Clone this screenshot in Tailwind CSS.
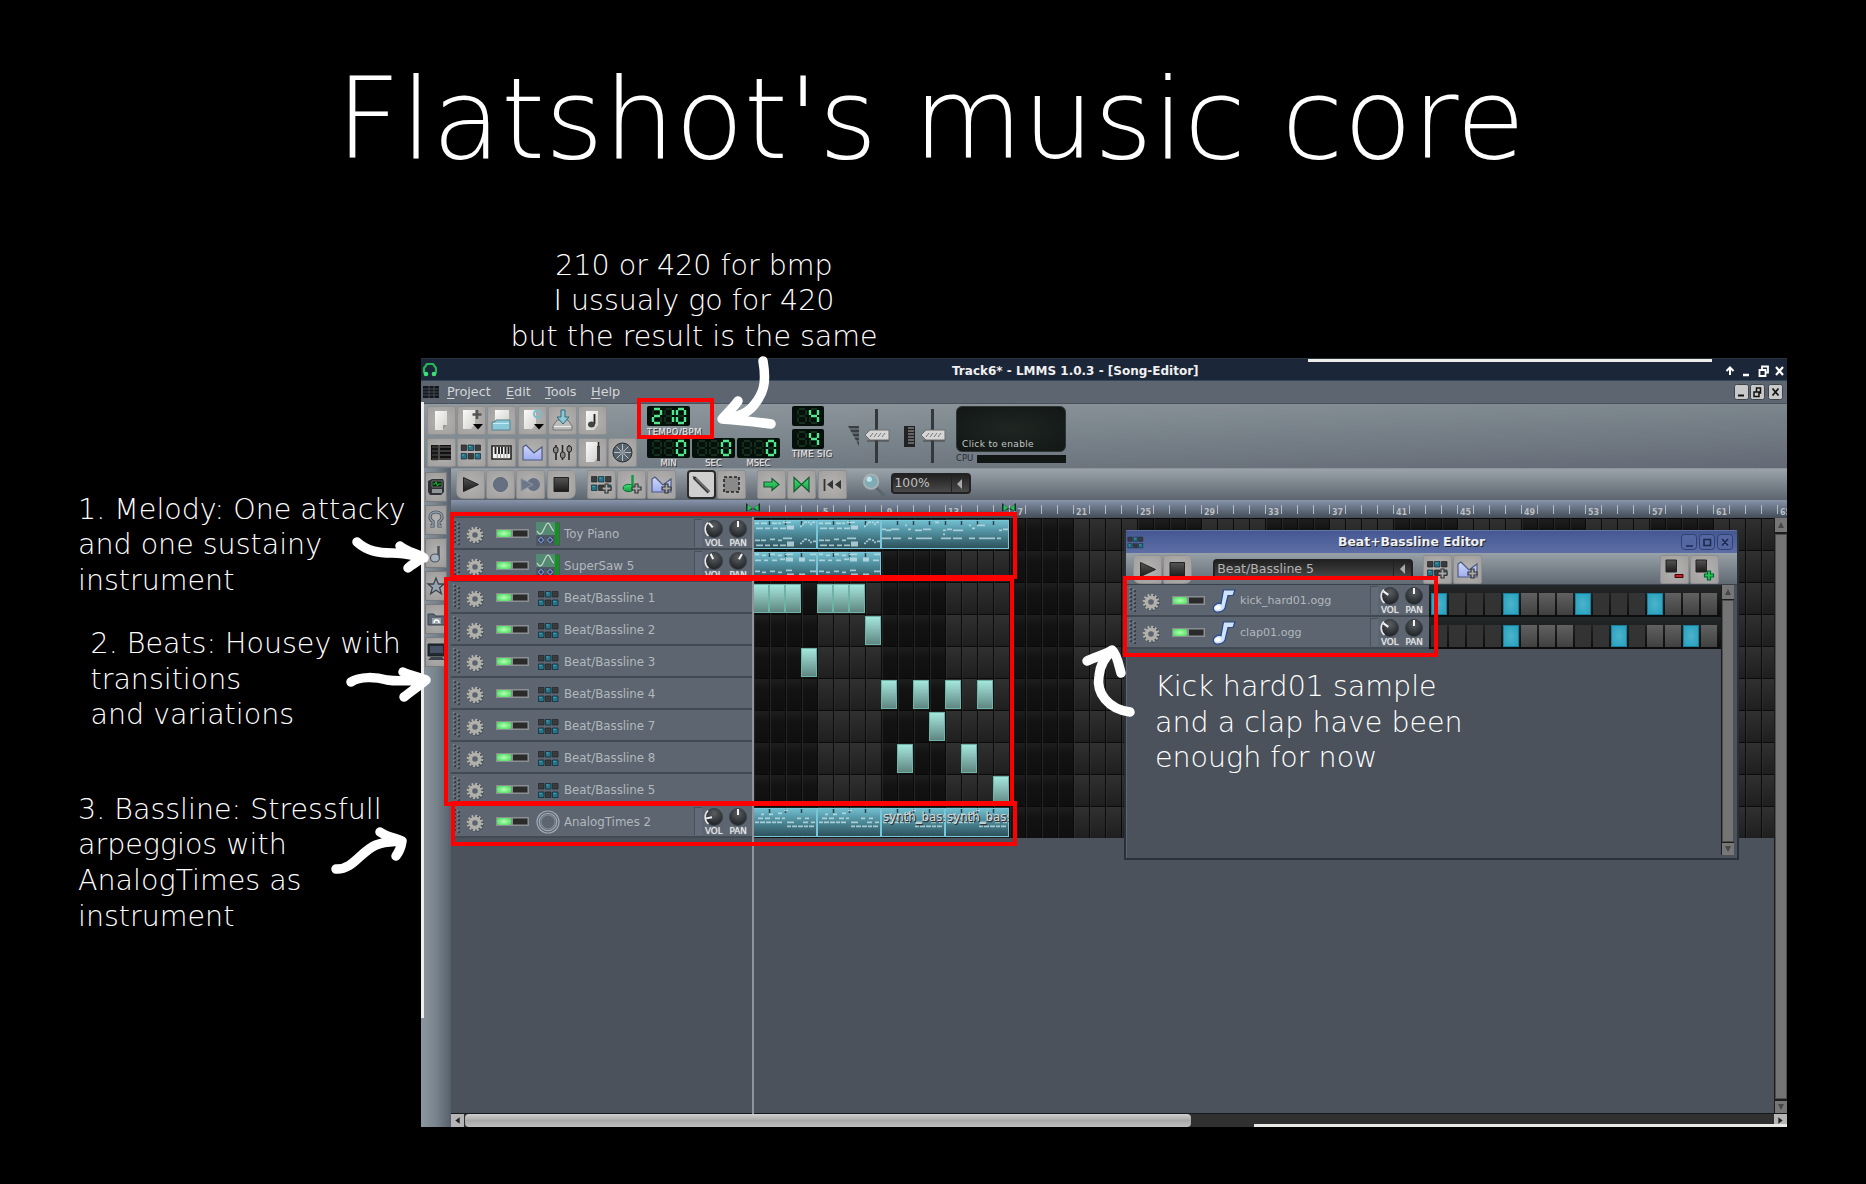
<!DOCTYPE html>
<html lang="en">
<head>
<meta charset="utf-8">
<title>Flatshot's music core</title>
<script src="https://cdn.jsdelivr.net/npm/@tailwindcss/browser@4"></script>
</head>
<body class="bg-black">
<svg class="absolute h-0 w-0" xmlns="http://www.w3.org/2000/svg">
  <defs>
    <linearGradient id="gBlue" x1="0" y1="0" x2="0" y2="1"><stop offset="0" stop-color="#cfd8f8"/><stop offset="1" stop-color="#9fadf2"/></linearGradient>
    <linearGradient id="gDark" x1="0" y1="0" x2="0" y2="1"><stop offset="0" stop-color="#555"/><stop offset="1" stop-color="#1c1c1c"/></linearGradient>
    <linearGradient id="gPaper" x1="0" y1="0" x2="1" y2="1"><stop offset="0" stop-color="#fafafa"/><stop offset="1" stop-color="#d2d2cc"/></linearGradient>
    <linearGradient id="gGreen" x1="0" y1="0" x2="0" y2="1"><stop offset="0" stop-color="#3fe07a"/><stop offset="1" stop-color="#12a040"/></linearGradient>
    <radialGradient id="gKnob" cx=".5" cy=".3" r=".7"><stop offset="0" stop-color="#5a5e62"/><stop offset="1" stop-color="#1e2124"/></radialGradient>
    <radialGradient id="gLed" cx=".5" cy=".5" r=".6"><stop offset="0" stop-color="#b4ffb0"/><stop offset="1" stop-color="#4fe065"/></radialGradient>
  </defs>
  <symbol id="i-new" viewBox="0 0 29 29"><path d="M8 5h12v14l-4 5H8z" fill="url(#gPaper)"/><path d="M20 19l-4 5v-5z" fill="#999"/></symbol>
  <symbol id="i-newt" viewBox="0 0 29 29"><path d="M6 4h12v14l-4 5H6z" fill="url(#gPaper)"/><path d="M20 4v9M15.500 8.500h9" stroke="#555" stroke-width="2.500"/><path d="M16 18h10l-5 5.500z" fill="#000"/></symbol>
  <symbol id="i-open" viewBox="0 0 29 29"><path d="M8 4h14v13H8z" fill="url(#gPaper)"/><path d="M5 16h3l1-2h14v10H5z" fill="#8cc9d8" stroke="#55828e"/><path d="M6 17.500h16" stroke="#c9eef5"/></symbol>
  <symbol id="i-recent" viewBox="0 0 29 29"><path d="M6 4h12v14l-4 5H6z" fill="url(#gPaper)"/><circle cx="19.500" cy="8" r="3.500" fill="none" stroke="#7cbccc" stroke-width="2"/><path d="M16 18h10l-5 5.500z" fill="#000"/></symbol>
  <symbol id="i-save" viewBox="0 0 29 29"><path d="M9 14h11l4 6v4H5v-4z" fill="#bbb" stroke="#777"/><path d="M6 20.500h17" stroke="#eee"/><path d="M13 4h4v7h4l-6 7-6-7h4z" fill="#8cc9d8" stroke="#336673"/></symbol>
  <symbol id="i-export" viewBox="0 0 29 29"><path d="M8 5h12v14l-4 5H8z" fill="url(#gPaper)"/><path d="M16.500 8v10" stroke="#222" stroke-width="1.800"/><ellipse cx="13.500" cy="18.500" rx="3.500" ry="3" fill="#444"/></symbol>
  <symbol id="i-song" viewBox="0 0 29 29"><path d="M4 7h20v15H4z" fill="#111"/><path d="M5 9h6M5 13h6M5 17h6M5 21h6" stroke="#333" stroke-width="2.500"/><path d="M13 9h11M13 13h11M13 17h11M13 21h11" stroke="#4a4a4a" stroke-width="1.500"/><path d="M12 7v15" stroke="#888"/></symbol>
  <symbol id="i-bb" viewBox="0 0 21 17"><path d="M.5 1.500h5.500v5.500H.5zM14.500 1.500h5.500v5.500h-5.500zM7.500 10h5.500v5.500H7.500z" fill="#383c3f" stroke="#222" stroke-width=".7"/><path d="M7.500 1.500h5.500v5.500H7.500zM.5 10h5.500v5.500H.5zM14.500 10h5.500v5.500h-5.500z" fill="#237687" stroke="#123" stroke-width=".7"/><path d="M8.500 3h2M1.500 11.500h2M15.500 11.500h2" stroke="#59aab8"/></symbol>
  <symbol id="i-piano" viewBox="0 0 29 29"><path d="M5 8h19v13H5z" fill="#f2f2f2" stroke="#222" stroke-width="1.600"/><path d="M8.500 9v7M12 9v7M15 9v7M18.500 9v7M21.500 9v7" stroke="#222" stroke-width="1.900"/><path d="M10.300 16v5M13.500 16v5M17 16v5M20 16v5" stroke="#777" stroke-width=".7"/></symbol>
  <symbol id="i-auto" viewBox="0 0 29 29"><path d="M5 9l3-2 8 8 8-6v13H5z" fill="url(#gBlue)" stroke="#4d5a80" stroke-width="1.200"/></symbol>
  <symbol id="i-mixer" viewBox="0 0 29 29"><path d="M8 7v15M14.500 7v15M21 7v15" stroke="#222" stroke-width="1.600"/><g fill="#888" stroke="#222"><rect x="5.500" y="9" width="4.500" height="6" rx="2"/><rect x="12.500" y="14" width="4.500" height="6" rx="2"/><rect x="19" y="8" width="4.500" height="6" rx="2"/></g></symbol>
  <symbol id="i-notes" viewBox="0 0 29 29"><path d="M8 4h12v15l-4 5H8z" fill="url(#gPaper)"/><path d="M20.500 8v15" stroke="#444" stroke-width="3"/><path d="M20.500 4v5" stroke="#222" stroke-width="1.500"/></symbol>
  <symbol id="i-ctrl" viewBox="0 0 29 29"><circle cx="14.500" cy="14.500" r="9.500" fill="#59636c" stroke="#222b33"/><path d="M14.500 6v17M6 14.500h17M8.500 8.500l12 12M20.500 8.500l-12 12" stroke="#b9c3cb"/><circle cx="14.500" cy="14.500" r="2.500" fill="#88929a"/></symbol>
  <symbol id="i-play" viewBox="0 0 29 29"><path d="M7.500 7.500l15 7-15 7z" fill="url(#gDark)" stroke="#222"/></symbol>
  <symbol id="i-rec" viewBox="0 0 29 29"><circle cx="14.500" cy="14.500" r="7" fill="#657183" stroke="#5a6575"/></symbol>
  <symbol id="i-recplay" viewBox="0 0 29 29"><circle cx="17.500" cy="14.500" r="6.500" fill="#657183"/><path d="M5 8.500l12 6-12 6.500z" fill="#6c788a" stroke="#8e96a2"/></symbol>
  <symbol id="i-stop" viewBox="0 0 29 29"><path d="M7 7.500h14.500v14H7z" fill="url(#gDark)" stroke="#222"/></symbol>
  <symbol id="i-plus" viewBox="0 0 29 29"><path d="M18 14h3v3h3v3h-3v3h-3v-3h-3v-3h3z" fill="#aaa" stroke="#333" stroke-width="1.200"/></symbol>
  <symbol id="i-addbb" viewBox="0 0 29 29"><use href="#i-bb" x="4" y="5" width="21" height="17"/><use href="#i-plus" width="29" height="29"/></symbol>
  <symbol id="i-addsample" viewBox="0 0 29 29"><path d="M15.500 5v14" stroke="#149a44" stroke-width="2.500"/><ellipse cx="11.500" cy="18" rx="5.500" ry="3.700" fill="url(#gGreen)" stroke="#0b6a2b"/><use href="#i-plus" width="29" height="29"/></symbol>
  <symbol id="i-addauto" viewBox="0 0 29 29"><use href="#i-auto" width="29" height="29"/><use href="#i-plus" width="29" height="29"/></symbol>
  <symbol id="i-pen" viewBox="0 0 29 29"><path d="M6 6.500l17 17" stroke="#3a3a3a" stroke-width="4"/><path d="M7.500 7l16 16" stroke="#777" stroke-width="1.500"/><path d="M4 4.500l4 1.500-2 2z" fill="#222"/></symbol>
  <symbol id="i-select" viewBox="0 0 29 29"><path d="M7 7h15v15H7z" fill="#8a8a8a" stroke="#222" stroke-width="1.600" stroke-dasharray="3 2"/></symbol>
  <symbol id="i-right" viewBox="0 0 29 29"><path d="M7 12h8V8.500l7 6-7 6V17H7z" fill="url(#gGreen)" stroke="#1c5a30" stroke-width="1.200"/></symbol>
  <symbol id="i-loop" viewBox="0 0 29 29"><path d="M7 7.500l7.500 7 7.500-7v14l-7.500-7-7.500 7z" fill="url(#gGreen)" stroke="#1c5a30" stroke-width="1.200"/></symbol>
  <symbol id="i-start" viewBox="0 0 29 29"><path d="M6.500 9v12" stroke="#333" stroke-width="1.800"/><path d="M15 10v9l-6-4.500zM23 10v9l-6-4.500z" fill="#333"/></symbol>
  <symbol id="i-lens" viewBox="0 0 26 26"><path d="M14 15l9 9" stroke="#5b666f" stroke-width="3"/><circle cx="9.500" cy="9.500" r="7.500" fill="#7eabb4" stroke="#a9b0b4" stroke-width="2"/><circle cx="7.500" cy="7" r="2.800" fill="#bfe2e6"/></symbol>
  <symbol id="i-rm" viewBox="0 0 29 29"><path d="M6 5h10.500v12H6z" fill="url(#gDark)" stroke="#222"/><path d="M15 19.500h8v3h-8z" fill="#c3222c" stroke="#400"/></symbol>
  <symbol id="i-ad" viewBox="0 0 29 29"><path d="M6 5h10.500v12H6z" fill="url(#gDark)" stroke="#222"/><path d="M17.500 16h3v3h3v3h-3v3h-3v-3h-3v-3h3z" fill="#25c452" stroke="#063" stroke-width="1.200"/></symbol>
  <symbol id="i-gear" viewBox="0 0 18 18"><circle cx="9.400" cy="9.900" r="6" fill="none" stroke="#333a42" stroke-width="4.500" stroke-dasharray="2 1.140" opacity=".6"/><circle cx="9" cy="9" r="7" fill="none" stroke="#b6b4ae" stroke-width="2.600" stroke-dasharray="1.900 1.765"/><circle cx="9" cy="9" r="4.600" fill="none" stroke="#b2b0aa" stroke-width="3.600"/></symbol>
  <symbol id="i-led" viewBox="0 0 33 9"><path d="M0 0h33v9H0z" fill="#8b8f91"/><path d="M17 1.500h14.500v6H17z" fill="#2a2a2a"/><rect x="1" y="1" width="14" height="7" rx="1.500" fill="url(#gLed)"/></symbol>
  <symbol id="i-grip" viewBox="0 0 9 26"><g fill="#353c45"><path d="M1 1h2v2H1zM5 3h2v2H5zM1 5h2v2H1zM5 7h2v2H5zM1 9h2v2H1zM5 11h2v2H5zM1 13h2v2H1zM5 15h2v2H5zM1 17h2v2H1zM5 19h2v2H5zM1 21h2v2H1zM5 23h2v2H5z"/></g><g fill="#7d8792"><path d="M0 0h1.500v1.500H0zM4 2h1.500v1.500H4zM0 4h1.500v1.500H0zM4 6h1.500v1.500H4zM0 8h1.500v1.500H0zM4 10h1.500v1.500H4zM0 12h1.500v1.500H0zM4 14h1.500v1.500H4zM0 16h1.500v1.500H0zM4 18h1.500v1.500H4zM0 20h1.500v1.500H0zM4 22h1.500v1.500H4z"/></g></symbol>
  <symbol id="i-osc" viewBox="0 0 24 24"><path d="M0 0h24v24H0z" fill="#4f5963"/><path d="M0 0h19v13H0z" fill="#548a72"/><path d="M1 9c3 5 5 3 7-2s4-8 6-4 3 6 4 6" fill="none" stroke="#c5dccf" stroke-width="1.200"/><path d="M19 1h4v22h-4z" fill="#12911f"/><path d="M2 15h6v6H2zM11 15h6v6h-6z" fill="#2d3c63"/><g fill="none" stroke="#9fb1d9"><circle cx="5" cy="18" r="2.300"/><circle cx="14" cy="18" r="2.300"/></g></symbol>
  <symbol id="i-bbt" viewBox="0 0 24 24"><use href="#i-bb" x="2" y="4" width="21" height="17"/></symbol>
  <symbol id="i-rings" viewBox="0 0 24 24"><g fill="none" stroke="#a0a9b1" stroke-width="1.200"><circle cx="12" cy="12" r="11"/><circle cx="12" cy="12" r="8.700"/><circle cx="12" cy="12" r="7" stroke="#7f8b94"/></g></symbol>
  <symbol id="i-note" viewBox="0 0 24 24"><path d="M11.500 1h11.500l-2 5.500h-5L13 19c-1 3-5 4.500-8.500 4C.5 22 .5 18 3 16c2-1.800 4.500-2 6-1.300z" fill="#cfe2f7" stroke="#28488a" stroke-width="1.200"/><ellipse cx="6" cy="18.500" rx="3" ry="2" fill="#fff"/></symbol>
  <symbol id="i-up" viewBox="0 0 12 12"><path d="M3 9h6L6 3z" fill="#474747"/></symbol>
  <symbol id="i-down" viewBox="0 0 12 12"><path d="M3 3h6L6 9z" fill="#474747"/></symbol>
  <symbol id="i-mark" viewBox="0 0 16 12"><path d="M1 1l7 6 7-6v8.500l-7-2.500-7 2.500z" fill="#24272c"/><path d="M2.500 2.500l4.500 3.500-4.500 3zM13.500 2.500L9 6l4.500 3z" fill="#1fc455"/></symbol>
  <symbol id="s-plug" viewBox="0 0 22 30"><path d="M3 9l4-2h11l1 3v10l-3 3H5l-2-3z" fill="#2e3234"/><path d="M7 9h10v6H7z" fill="#04240c" stroke="#888" stroke-width=".7"/><path d="M8 12h2l1-2 1.500 4 1-2H16" fill="none" stroke="#16c23c"/><path d="M7 17h10v4H7z" fill="#8f9596"/></symbol>
  <symbol id="s-head" viewBox="0 0 22 30"><path d="M5 21h3v-4.500c-2.500-1.500-3-3-3-4.500 0-3 2.500-5 6-5s6 2 6 5c0 1.500-.5 3-3 4.500V21h3" fill="none" stroke="#4a5560" stroke-width="3.200"/><path d="M5 21h3v-4.500c-2.500-1.500-3-3-3-4.500 0-3 2.500-5 6-5s6 2 6 5c0 1.500-.5 3-3 4.500V21h3" fill="none" stroke="#939faa" stroke-width="1.400"/></symbol>
  <symbol id="s-note" viewBox="0 0 22 30"><path d="M13.500 8v13" stroke="#4a5560" stroke-width="2.500"/><ellipse cx="10" cy="20" rx="4.500" ry="4" fill="#a8b2bd" stroke="#4a5560" stroke-width="1.200"/></symbol>
  <symbol id="s-star" viewBox="0 0 22 30"><path d="M11 7l2.400 6H19l-4.400 3.800 1.800 6L11 19.300l-5.400 3.500 1.800-6L3 13h5.600z" fill="#97a3b0" stroke="#39434e" stroke-width="1.300"/></symbol>
  <symbol id="s-folder" viewBox="0 0 22 30"><path d="M3 10h6l1.500 2H20v9H3z" fill="#5c6874" stroke="#39434e"/><path d="M7 14h9v6H7z" fill="#9aa5af"/><path d="M9 19c0-4 5-4 5 0" fill="none" stroke="#fff" stroke-width="1.500"/></symbol>
  <symbol id="s-pc" viewBox="0 0 22 30"><path d="M3 7h17v12H3z" fill="#232a33" stroke="#161a20"/><path d="M5 9h13v7H5z" fill="#465263"/><path d="M6 20h11l3 3H3z" fill="#39424c"/></symbol>
</svg>

<main class="relative h-[1184px] w-[1866px] overflow-hidden bg-black font-['DejaVu_Sans',sans-serif]">
  <h1 class="absolute top-[64px] left-[336px] font-['DejaVu_Sans_Light','DejaVu_Sans',sans-serif] text-[112.5px] leading-none font-extralight whitespace-nowrap text-white">Flatshot's music core</h1>

  <!-- LMMS main window -->
  <section class="absolute top-[358px] left-[421px] flex h-[769px] w-[1366px] flex-col bg-[#4b525b]">
    <header class="flex h-[23px] shrink-0 items-center border-y border-t-[#2a343e] border-b-[#33475a] bg-[#1b2738] text-[12px] font-bold text-[#f0f0f0]">
      <svg class="ml-px h-4 w-4" viewBox="0 0 16 16"><path d="M3.500 12.500L2 10V6l3-4h6l3 4v4l-1.500 2.500" fill="none" stroke="#27b457" stroke-width="2.200"/><circle cx="4" cy="12" r="2.300" fill="#3fe07a"/><circle cx="12" cy="12" r="2.300" fill="#3fe07a"/></svg>
      <div class="ml-[514px] pt-[3px] whitespace-nowrap">Track6* - LMMS 1.0.3 - [Song-Editor]</div>
      <svg class="mr-[3px] ml-auto h-[18px] w-[64px]" viewBox="0 0 64 18" fill="none" stroke="#fff"><path d="M10 14V7M6.500 10L10 6.500 13.500 10" stroke-width="2"/><path d="M23 14h6" stroke-width="2.500"/><path d="M39.500 9h6v6h-6zM42 8.500V5.500h6v6h-2" stroke-width="1.800"/><path d="M56 6l7 8M63 6l-7 8" stroke-width="2.200"/></svg>
    </header>
    <nav class="flex h-[23px] shrink-0 items-center border-b border-[#49525c] bg-[#5c6570] text-[12.800px] text-[#d4d6d8]">
      <svg class="ml-0.5 h-3 w-4" viewBox="0 0 16 12"><path d="M0 0h16v12H0z" fill="#14171a"/><path d="M0 3h16M0 6h16M0 9h16M6 0v12M11 0v12" stroke="#444b52"/></svg>
      <span class="ml-2 w-[59px]"><u class="underline-offset-2">P</u>roject</span>
      <span class="w-[39px]"><u class="underline-offset-2">E</u>dit</span>
      <span class="w-[46px]"><u class="underline-offset-2">T</u>ools</span>
      <span><u class="underline-offset-2">H</u>elp</span>
      <svg class="mr-1 ml-auto h-4 w-[49px]" viewBox="0 0 49 16"><g fill="#c9c9c9" stroke="#3c444c"><rect x=".5" y=".5" width="14" height="15" rx="2"/><rect x="16.500" y=".5" width="14" height="15" rx="2"/><rect x="34.500" y=".5" width="14" height="15" rx="2"/></g><path d="M4 11.500h6" stroke="#111" stroke-width="2"/><path d="M20 8h5v4.500h-5zM22.500 7.500V4h4v5h-1.500" stroke="#111" stroke-width="1.500" fill="none"/><path d="M38.500 4.500l6 7M44.500 4.500l-6 7" stroke="#111" stroke-width="1.700"/></svg>
    </nav>

    <div class="flex h-[64px] shrink-0 items-start bg-[linear-gradient(178deg,#909a9f_0%,#7b858c_45%,#636975_100%)] pt-0.5 pl-1.5">
      <div class="flex w-[220px] flex-col gap-[3px]">
        <div class="flex gap-[1.200px]" data-icons="new newt open recent save export"></div>
        <div class="flex gap-[1.200px]" data-icons="song bbb piano auto mixer notes ctrl"></div>
      </div>
      <div class="flex w-[145px] flex-col text-[8.500px] leading-[9px] text-[#e0e2e4] [text-shadow:1px_1px_0_#333,0_0_1px_#ddd]">
        <div class="flex h-8 flex-col"><div data-lcd="210"></div><span class="mt-0.5 tracking-[.45px]">TEMPO/BPM</span></div>
        <div class="flex gap-0.5">
          <div class="flex flex-col items-center"><div data-lcd="  0"></div><span class="mt-px">MIN</span></div>
          <div class="flex flex-col items-center"><div data-lcd="  0"></div><span class="mt-px">SEC</span></div>
          <div class="flex flex-col items-center"><div data-lcd="  0"></div><span class="mt-px">MSEC</span></div>
        </div>
      </div>
      <div class="flex w-[56px] flex-col text-[8.500px] leading-[9px] text-[#e0e2e4] [text-shadow:1px_1px_0_#333,0_0_1px_#ddd]">
        <div class="h-[23px]" data-lcd=" 4"></div><div data-lcd=" 4"></div><span class="mt-px tracking-[.4px] whitespace-nowrap">TIME SIG</span>
      </div>
      <svg class="h-[60px] w-[108px] shrink-0" viewBox="848 406 108 60">
        <path d="M848 426h11v20z" fill="#3b4045"/><path d="M849 429h10M851 433h8M853 437h6M855 441h4" stroke="#858c92"/>
        <path d="M876.500 409v54M932.500 409v54" stroke="#33383d" stroke-width="3"/>
        <g id="fader"><path d="M865 435l5-5h19v10h-19z" fill="#d5d5d5" stroke="#6d6d6d"/><path d="M870 437l3-4M874 437l3-4M878 437l3-4M882 437l3-4" stroke="#777"/><path d="M867 441h22" stroke="#444"/></g>
        <use href="#fader" x="56"/>
        <path d="M904 426h11v21h-11z" fill="#222"/><path d="M908 428h6M908 431h6M908 434h6M908 437h6M908 440h6M908 443h6" stroke="#a4a8ab"/>
      </svg>
      <div class="flex w-[110px] flex-col">
        <div class="flex h-[46px] items-end rounded-md border border-[#2c3532] bg-[radial-gradient(#1f2622,#121715)] pb-px pl-[5px] text-[9px] leading-[11px] tracking-[.35px] whitespace-nowrap text-[#c4c8c4]">Click to enable</div>
        <div class="mt-px flex items-center text-[8.500px] leading-[9px] text-[#252b31]"><span class="w-[21px]">CPU</span><span class="mt-0.5 h-2 grow bg-[#111514]"></span></div>
      </div>
    </div>

    <div class="flex min-h-0 grow">
      <!-- side bar -->
      <aside class="flex w-[30px] shrink-0 flex-col gap-[3px] bg-[linear-gradient(90deg,#8b969e,#78838c_50%,#56606c)] pt-1 pl-1" id="sidebar"></aside>

      <div class="flex min-w-0 grow flex-col">
        <div class="flex h-8 shrink-0 items-start border-t border-[#8a949a] bg-gradient-to-b from-[#9aa3a9] to-[#5d666f] pt-px pl-[5px]">
          <div class="mr-[11px] flex gap-[1.200px] overflow-hidden rounded-lg" data-icons="play rec recplay stop"></div>
          <div class="mr-[11px] flex gap-[1.200px]" data-icons="addbb addsample addauto"></div>
          <div class="mr-[11px] flex gap-[1.200px]" data-icons="pen select"></div>
          <div class="mr-[15px] flex gap-[1.200px]" data-icons="right loop start"></div>
          <svg class="mt-0.5 mr-[4px] h-[26px] w-[25px]"><use href="#i-lens"/></svg>
          <div class="mt-[3px] flex h-[21px] w-20 items-center rounded-sm border-2 border-[#222] bg-gradient-to-b from-[#222] to-[#4a4a4a] pl-[2px] text-[12.300px] text-[#c2c2c2]">100%<span class="ml-auto flex h-full w-[18px] items-center justify-center border-l border-[#222]"><svg class="h-2.5 w-2" viewBox="0 0 8 10"><path d="M6 0v10L1 5z" fill="#aaa"/></svg></span></div>
        </div>

        <!-- timeline ruler -->
        <svg class="h-[18px] w-full shrink-0" id="ruler" viewBox="451 500 1336 18"></svg>

        <div class="relative flex min-h-0 grow">
          <div class="flex w-[302px] shrink-0 flex-col" id="tracks"></div>
          <svg class="h-[596px] w-[1021px] shrink-0" id="song" viewBox="753 518 1021 596">
            <defs>
              <linearGradient id="cd" x1="0" y1="0" x2="0" y2="1"><stop offset="0" stop-color="#1f1f1f"/><stop offset=".35" stop-color="#131313"/><stop offset="1" stop-color="#0f0f0f"/></linearGradient>
              <linearGradient id="cl" x1="0" y1="0" x2="0" y2="1"><stop offset="0" stop-color="#323232"/><stop offset=".4" stop-color="#292929"/><stop offset="1" stop-color="#1f1f1f"/></linearGradient>
              <linearGradient id="pc" x1="0" y1="0" x2="0" y2="1"><stop offset="0" stop-color="#72bfd0"/><stop offset=".35" stop-color="#5496a6"/><stop offset="1" stop-color="#2c505a"/></linearGradient>
              <linearGradient id="bc" x1="0" y1="0" x2="0" y2="1"><stop offset="0" stop-color="#a6e8de"/><stop offset="1" stop-color="#5e8580"/></linearGradient>
              <pattern id="cells" patternUnits="userSpaceOnUse" x="753" y="518" width="128" height="32">
                <path d="M0 0h64v32H0z" fill="url(#cd)"/><path d="M64 0h64v32H64z" fill="url(#cl)"/>
                <path d="M0 .5h128" stroke="#0a0a0a"/>
                <path d="M.5 0v32M16.500 0v32M32.500 0v32M48.500 0v32M64.500 0v32M80.500 0v32M96.500 0v32M112.500 0v32" stroke="#0a0a0a"/>
                <path d="M1.500 0v32M17.500 0v32M33.500 0v32M49.500 0v32M65.500 0v32M81.500 0v32M97.500 0v32M113.500 0v32" stroke="#333" stroke-opacity=".55"/>
              </pattern>
            </defs>
            <path d="M753 518h1021v320H753z" fill="url(#cells)"/>
            <g id="clips"></g>
          </svg>
          <div class="flex w-[13px] shrink-0 flex-col gap-0.5 border-l border-[#1c1c1c] bg-[#1c1c1c]">
            <svg class="h-3.5 w-3 bg-[#777]"><use href="#i-up"/></svg>
            <div class="w-3 grow border border-[#4e4e4e] bg-[#747474]"></div>
            <svg class="h-3 w-3 bg-[#777]"><use href="#i-down"/></svg>
          </div>
          <div class="absolute -top-px left-[301px] h-[597px] w-[1.500px] bg-[#8f959b]"></div>
        </div>
        <div class="flex h-3.5 shrink-0 border-t border-[#15181b] bg-[#303030]">
          <svg class="h-[13px] w-[13px] bg-[#b5b5b5]" viewBox="0 0 12 12"><path d="M8 3v6L4 6z" fill="#222"/></svg>
          <div class="ml-px w-[726px] rounded-sm bg-[linear-gradient(#cfcfcf,#a9a9a9_50%,#bdbdbd)]"></div>
          <svg class="ml-auto h-[13px] w-[13px] bg-[#b5b5b5]" viewBox="0 0 12 12"><path d="M4 3v6l4-3z" fill="#222"/></svg>
        </div>
      </div>
    </div>
  </section>

  <!-- white edges around the window -->
  <div class="absolute top-[359px] left-[1308px] h-[3px] w-[404px] bg-[#eeeceb]"></div>
  <div class="absolute top-[402px] left-[421px] h-[616px] w-[3px] bg-[#f0eeec]"></div>
  <div class="absolute top-[1124px] left-[1254px] h-[3px] w-[533px] bg-[#e8e8e4]"></div>

  <!-- Beat+Bassline window -->
  <section class="absolute top-[530px] left-[1124px] flex h-[330px] w-[615px] flex-col rounded-t border-2 border-t-1 border-[#2a3038] border-t-[#6273a8] bg-[#4b525b]">
    <header class="flex h-[22px] shrink-0 items-center bg-gradient-to-b from-[#455891] to-[#5d6ea6] text-[12.400px] font-bold text-[#eef0f4] [text-shadow:1px_1px_0_#222]">
      <svg class="ml-px h-[13px] w-[17px]"><use href="#i-bb"/></svg>
      <div class="ml-[194px] whitespace-nowrap">Beat+Bassline Editor</div>
      <svg class="mr-1 ml-auto h-4 w-[52px]" viewBox="0 0 52 16" fill="none"><g stroke="#2f3f74" fill="#5567a0"><rect x=".5" y=".5" width="15" height="15" rx="3"/><rect x="18.500" y=".5" width="15" height="15" rx="3"/><rect x="36.500" y=".5" width="15" height="15" rx="3"/></g><path d="M5 12h7M23 5.500h6.500v6H23zM41 5l6 6.500M47 5l-6 6.500" stroke="#1d2950" stroke-width="1.600"/></svg>
    </header>
    <div class="flex h-8 shrink-0 items-start border-b border-[#3a4149] bg-gradient-to-b from-[#98a1a7] to-[#616a73] pt-0.5 pl-[7px]">
      <div class="mr-[21px] flex gap-[1.200px] overflow-hidden rounded-lg" data-icons="play stop"></div>
      <div class="mt-1 mr-[10px] flex h-[21px] w-[200px] items-center rounded-sm border-2 border-[#222] bg-gradient-to-b from-[#222] to-[#4a4a4a] pb-px pl-0.5 text-[12.500px] text-[#b4b4b4]">Beat/Bassline 5<span class="ml-auto flex h-full w-[18px] items-center justify-center border-l border-[#222]"><svg class="h-2.5 w-2" viewBox="0 0 8 10"><path d="M6 0v10L1 5z" fill="#aaa"/></svg></span></div>
      <div class="flex gap-[1.200px]" data-icons="addbb addauto"></div>
      <div class="mr-[18px] ml-auto flex gap-[1.200px]" data-icons="rm ad"></div>
    </div>
    <div class="flex min-h-0 grow pr-[3px]">
      <div class="flex w-[303px] flex-col border-l border-[#5c6570]" id="bbtracks"></div>
      <div class="flex grow flex-col">
        <div class="flex h-16 flex-col bg-[#1b1d1e]" id="steps"></div>
      </div>
      <div class="mb-[3px] flex w-[13px] shrink-0 flex-col gap-px border-l border-[#1c1c1c] bg-[#1c1c1c]">
        <svg class="h-3.5 w-3 bg-[#777]"><use href="#i-up"/></svg>
        <div class="w-3 grow border border-[#4e4e4e] bg-[#747474]"></div>
        <svg class="h-3 w-3 bg-[#777]"><use href="#i-down"/></svg>
      </div>
    </div>
  </section>

  <!-- highlight frames -->
  <div class="absolute top-[398px] left-[637px] h-[41px] w-[77px] border-4 border-[#f00]"></div>
  <div class="absolute top-[512px] left-[450px] h-[67px] w-[567px] border-4 border-[#f00]"></div>
  <div class="absolute top-[577px] left-[444px] h-[229px] w-[570px] border-4 border-[#f00]"></div>
  <div class="absolute top-[801px] left-[451px] h-[45px] w-[566px] border-4 border-[#f00]"></div>
  <div class="absolute top-[576px] left-[1123px] h-[81px] w-[315px] border-4 border-[#f00]"></div>

  <!-- hand-drawn arrows -->
  <svg class="absolute inset-0" width="1866" height="1184" fill="none" stroke="#fff" stroke-width="9.500" stroke-linecap="round" stroke-linejoin="round">
    <path d="M763 361C767 384 763 394 754 405 747 414 735 418 722 419M738 401C734 407 728 412 722 419 738 420 756 422 771 424"/>
    <path d="M357 542C367 551 378 553 392 553 406 553 414 556 424 558M400 546C407 552 416 553 423 557 418 562 412 564 408 568"/>
    <path d="M351 682C360 676 376 677 387 680 400 682 412 680 426 680M403 672C410 675 418 677 426 680 418 687 410 692 404 697"/>
    <path d="M336 869C353 870 361 851 376 845 386 841 394 842 402 841M380 832C387 837 396 838 402 841 401 848 399 852 396 856"/>
    <path d="M1130 712C1108 709 1096 693 1099 676 1100 665 1106 656 1112 651M1087 661C1095 657 1104 655 1112 650 1117 654 1119 666 1121 673"/>
  </svg>

  <div class="absolute top-[247.600px] left-[494px] w-[400px] text-center font-['DejaVu_Sans_Light','DejaVu_Sans',sans-serif] text-[28.500px] leading-[35.670px] font-extralight whitespace-nowrap text-white">210 or 420 for bmp<br>I ussualy go for 420<br>but the result is the same</div>
  <div class="absolute top-[491.700px] left-[78px] font-['DejaVu_Sans_Light','DejaVu_Sans',sans-serif] text-[28.500px] leading-[35.670px] font-extralight whitespace-nowrap text-white">1. Melody: One attacky<br>and one sustainy<br>instrument</div>
  <div class="absolute top-[626.100px] left-[90.500px] font-['DejaVu_Sans_Light','DejaVu_Sans',sans-serif] text-[28.500px] leading-[35.670px] font-extralight whitespace-nowrap text-white">2. Beats: Housey with<br>transitions<br>and variations</div>
  <div class="absolute top-[791.600px] left-[78px] font-['DejaVu_Sans_Light','DejaVu_Sans',sans-serif] text-[28.500px] leading-[35.670px] font-extralight whitespace-nowrap text-white">3. Bassline: Stressfull<br>arpeggios with<br>AnalogTimes as<br>instrument</div>
  <div class="absolute top-[669px] left-[1155px] font-['DejaVu_Sans_Light','DejaVu_Sans',sans-serif] text-[28.500px] leading-[35.670px] font-extralight whitespace-nowrap text-white">Kick hard01 sample<br>and a clap have been<br>enough for now</div>
</main>

<script>
// Toolbar buttons
document.querySelectorAll('[data-icons]').forEach(el => {
  el.innerHTML = el.dataset.icons.split(' ').map(n => {
    const ink = n === 'bbb' ? '<use href="#i-bb" x="3.500" y="5.500" width="21" height="17"/>' : `<use href="#i-${n}"/>`;
    return n === 'pen'
      ? `<svg class="h-[29px] w-[29px] shrink-0 rounded-sm border-2 border-[#2a2a2a] bg-[#cfcfcf]" viewBox="0 0 29 29">${ink}</svg>`
      : `<svg class="h-[29px] w-[29px] shrink-0 rounded-xs border border-[#8d8f90] bg-[radial-gradient(#b5b4b2,#a09f9d)]" viewBox="1 1 27 27">${ink}</svg>`;
  }).join('');
});
document.getElementById('sidebar').innerHTML = ['plug','head','note','star','folder','pc'].map(n =>
  `<svg class="h-[30px] w-[22px] shrink-0 border border-[#777b7e] bg-[radial-gradient(#b5b4b2,#9a9997)]" viewBox="1 1 20 28"><use href="#s-${n}" width="22" height="30"/></svg>`).join('');
document.querySelectorAll('[data-icons] svg > use:not([x])').forEach(u => { u.setAttribute('width', 29); u.setAttribute('height', 29); });

// Seven-segment displays
const SEG = ['M2 1h6','M9 2v5','M9 9v5','M2 15h6','M1 9v5','M1 2v5','M2 8h6'];
const ON = {'0':[0,1,2,3,4,5],'1':[1,2],'2':[0,1,6,4,3],'4':[5,6,1,2]};
document.querySelectorAll('[data-lcd]').forEach(el => {
  const s = el.dataset.lcd, w = s.length === 3 ? 43 : 32;
  let g = '';
  [...s].forEach((c, i) => {
    const on = ON[c] || [];
    g += `<g transform="translate(${5 + i * 12} 2)">` + SEG.map((d, k) =>
      `<path d="${d}" stroke="${on.includes(k) ? '#52e890' : '#16301f'}" stroke-width="${on.includes(k) ? 2.4 : 1.8}"/>`).join('') + '</g>';
  });
  el.innerHTML = `<svg class="block rounded-xs bg-[#06100a]" width="${w}" height="20" viewBox="0 0 ${w} 20">${g}</svg>`;
});

// Ruler
let r = '<defs><linearGradient id="rg" x1="0" y1="0" x2="0" y2="1"><stop offset="0" stop-color="#8693aa"/><stop offset="1" stop-color="#434c56"/></linearGradient></defs><path d="M451 500h1336v18H451z" fill="url(#rg)"/>';
for (let b = 1; b <= 65; b++) {
  const x = 753 + (b - 1) * 16;
  if (b > 1) r += `<path d="M${x + .5} 505v9" stroke="#b4bac2"/>`;
  if (b % 4 === 1 && b > 1) r += `<text x="${x + 8.5}" y="514.500" text-anchor="middle" font-size="8" font-weight="bold" fill="#b9bec4">${b}</text>`;
}
r += '<use href="#i-mark" x="745" y="502" width="16" height="12"/><use href="#i-mark" x="1001" y="502" width="16" height="12"/>';
document.getElementById('ruler').innerHTML = r;

// Track headers
const knob = (label, a) => `<div class="flex w-[24.500px] flex-col items-center pt-px text-[8.800px] leading-[9px] text-[#e3e5e7] [text-shadow:0_0_1px_#ddd]"><svg class="h-5 w-5" viewBox="-10 -10 20 20"><circle r="8.500" fill="url(#gKnob)" stroke="#3a4047"/>${label === 'VOL' ? '<path d="M-5.500 7A9 9 0 0 1-6 -6.500" fill="none" stroke="#e8e8e8" stroke-width="1.600"/>' : ''}<path d="M0-2V-8" stroke="#f4f4f4" stroke-width="2" transform="rotate(${a})"/></svg>${label}</div>`;
const header = (icon, name, knobs) => `<div class="flex h-8 shrink-0 items-center border-b-2 border-[#414952] bg-[#5c6570] pl-0.5">
  <svg class="mr-1 h-[26px] w-[9px]"><use href="#i-grip"/></svg><svg class="mt-[3px] mr-3 h-[18px] w-[18px]"><use href="#i-gear"/></svg>
  <svg class="mt-px mr-[7px] h-[9px] w-[33px]"><use href="#i-led"/></svg><svg class="mt-px mr-1 h-6 w-6"><use href="#i-${icon}"/></svg>
  ${icon === 'note' ? `<span class="pt-[3px] text-[11.100px] whitespace-nowrap text-[#b3b8bd]">${name}</span>` : `<span class="pt-[3px] text-[11.800px] whitespace-nowrap text-[#b3b8bd]">${name}</span>`}
  ${knobs ? `<div class="ml-auto flex items-center pr-[2.500px]"><span class="h-7 w-2 border-t border-l border-[#48515b] bg-[#626c78]"></span>${knob('VOL', knobs[0])}${knob('PAN', knobs[1])}</div>` : ''}</div>`;
document.getElementById('tracks').innerHTML =
  header('osc', 'Toy Piano', [-40, 0]) + header('osc', 'SuperSaw 5', [-25, 30]) +
  [1, 2, 3, 4, 7, 8, 5].map(n => header('bbt', 'Beat/Bassline ' + n)).join('') +
  header('rings', 'AnalogTimes 2', [-100, 0]);
document.getElementById('bbtracks').innerHTML = header('note', 'kick_hard01.ogg', [-55, 0]) + header('note', 'clap01.ogg', [-55, 0]);

// Step sequencer rows
const steps = [[0, 4, 8, 12], [4, 10, 14]];
document.getElementById('steps').innerHTML = steps.map(on => '<div class="flex h-8 items-end gap-0.5 bg-gradient-to-b from-[#25282a] to-[#0c0c0c] pb-0.5 pl-0.5">' +
  Array.from({ length: 16 }, (_, i) => on.includes(i)
    ? '<span class="h-[22px] w-4 border border-[#1b7f9a] bg-[radial-gradient(#50b2ca,#22a2c0)]"></span>'
    : (i >> 2) % 2 ? '<span class="h-[22px] w-4 bg-gradient-to-b from-[#616161] to-[#414141]"></span>'
                   : '<span class="h-[22px] w-4 bg-[#333]"></span>').join('') + '</div>').join('');

// Clips on the song canvas
const piano = [[2,2,4],[8,2,6],[19,2,5],[25,2,3],[30,1,8],[3,7,7],[12,7,5],[20,7,5],[27,7,6],[34,5,7,4],[47,5,2],[49,3,2],[51,1,3],[55,1,2],[57,3,2],[59,1,3],
  [2,19,5],[8,19,5],[17,18,5],[25,19,4],[30,17,9],[3,24,7],[12,24,5],[20,24,5],[27,24,6],[34,21,7,5],[47,22,2],[49,20,2],[51,18,3],[55,19,2],[57,21,2],[60,20,3]];
const lead = [[1,8,4],[5,9,5],[10,8,8],[24,4,2],[27,8,3],[34,9,7],[42,8,8],[54,1,4],[62,9,3],[66,8,5],[72,9,10],[88,4,2],[91,7,3],[96,4,8],[118,9,3],[122,8,5],
  [1,17,9],[12,17,8],[27,17,4],[35,17,16],[62,13,2],[60,17,10],[72,17,9],[88,17,6],[98,17,16],[116,17,4]];
const saw = [[2,1,4],[9,2,4],[17,1,5],[25,2,4],[32,1,8],[2,7,6],[11,7,4],[19,7,5],[27,6,5],[33,5,7,4],[46,5,6,4],[56,7,6],[57,1,6],
  [2,18,5],[9,19,4],[17,18,5],[25,19,4],[33,17,6],[34,21,7],[46,21,6],[57,18,6]];
const bass = [[8,5,3],[16,5,4],[25,4,4],[31,1,4],[5,9,5],[12,9,5],[22,9,5],[29,9,3],[2,13,4],[7,13,5],[13,13,5],[19,13,4],[24,13,5],[34,13,7],[44,9,4],[52,9,4],[50,13,5],[58,13,4],[34,17,4],[39,17,5],[45,17,5],[51,17,4],[56,17,5]];
const notes = (x, y, l) => l.map(n => `<rect x="${x + n[0]}" y="${y + n[1]}" width="${n[2]}" height="${n[3] || 1.7}" fill="#c2dfe6" opacity=".8"/>`).join('');
const pat = (bar, row, w, l, label) => {
  const x = 753 + bar * 16, y = 520 + row * 32;
  let t = '';
  for (let k = 16; k < w * 16; k += 16) t += `<path d="M${x + k + .5} ${y + 1}v4" stroke="#26444d" stroke-width="1.500"/>`;
  return `<svg x="${x}" y="${y}" width="${w * 16}" height="29" viewBox="${x} ${y} ${w * 16} 29"><rect x="${x + .5}" y="${y + .5}" width="${w * 16 - 1}" height="28" fill="url(#pc)" stroke="#79c6d8"/>${t}${notes(x, y + .5, l)}` +
    (label ? `<text x="${x + 3}" y="${y + 14}" font-size="11.800" fill="#333" stroke="#333" stroke-width=".4">${label}</text><text x="${x + 2}" y="${y + 13}" font-size="11.800" fill="#d5dadc">${label}</text>` : '') + '</svg>';
};
const bb = (bar, row) => `<rect x="${753.5 + bar * 16}" y="${520.5 + row * 32}" width="15" height="28" fill="url(#bc)" stroke="#6fb3a8"/>`;
document.getElementById('clips').innerHTML =
  pat(0, 0, 4, piano) + pat(4, 0, 4, piano) + pat(8, 0, 8, lead) + pat(0, 1, 4, saw) + pat(4, 1, 4, saw) +
  pat(0, 9, 4, bass) + pat(4, 9, 4, bass) + pat(8, 9, 4, bass, 'synth_bass') + pat(12, 9, 4, bass, 'synth_bass') +
  [[0,2],[1,2],[2,2],[4,2],[5,2],[6,2],[7,3],[3,4],[8,5],[10,5],[12,5],[14,5],[11,6],[9,7],[13,7],[15,8]].map(a => bb(a[0], a[1])).join('');
</script>
</body>
</html>
